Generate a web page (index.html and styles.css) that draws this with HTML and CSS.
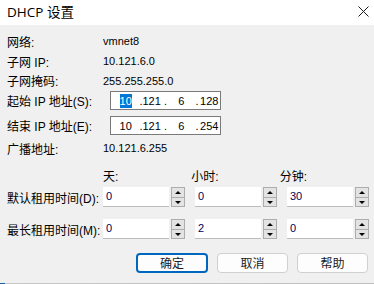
FILE: index.html
```html
<!DOCTYPE html>
<html>
<head>
  <meta charset="UTF-8">
  <link rel="stylesheet" href="styles.css">
</head>
<body>
  <div class="dialog">
    <div class="titlebar">
      <span class="title">DHCP 设置</span>
      <svg class="close" width="11" height="11" viewBox="0 0 11 11">
        <path d="M0.5 0.5 L10.5 10.5 M10.5 0.5 L0.5 10.5" stroke="#1a1a1a" stroke-width="1" fill="none"/>
      </svg>
    </div>

    <div class="content">
      <div class="row r-net">
        <span class="label">网络:</span>
        <span class="value">vmnet8</span>
      </div>
      <div class="row r-subnet">
        <span class="label">子网 IP:</span>
        <span class="value">10.121.6.0</span>
      </div>
      <div class="row r-mask">
        <span class="label">子网掩码:</span>
        <span class="value">255.255.255.0</span>
      </div>

      <div class="row r-start">
        <span class="label">起始 IP 地址(S):</span>
        <div class="ipbox">
          <span class="f f1"><span class="sel">10</span></span><span class="dot">.</span><span class="f f2">121</span><span class="dot">.</span><span class="f f3">6</span><span class="dot">.</span><span class="f f4">128</span>
        </div>
      </div>
      <div class="row r-end">
        <span class="label">结束 IP 地址(E):</span>
        <div class="ipbox">
          <span class="f f1">10</span><span class="dot">.</span><span class="f f2">121</span><span class="dot">.</span><span class="f f3">6</span><span class="dot">.</span><span class="f f4">254</span>
        </div>
      </div>
      <div class="row r-bcast">
        <span class="label">广播地址:</span>
        <span class="value">10.121.6.255</span>
      </div>

      <div class="row r-heads">
        <span class="label"></span>
        <span class="head">天:</span>
        <span class="head">小时:</span>
        <span class="head">分钟:</span>
      </div>

      <div class="row r-default">
        <span class="label">默认租用时间(D):</span>
        <div class="spin"><span class="num">0</span><div class="arrows"><span class="up"></span><span class="down"></span></div></div>
        <div class="spin"><span class="num">0</span><div class="arrows"><span class="up"></span><span class="down"></span></div></div>
        <div class="spin"><span class="num">30</span><div class="arrows"><span class="up"></span><span class="down"></span></div></div>
      </div>
      <div class="row r-max">
        <span class="label">最长租用时间(M):</span>
        <div class="spin"><span class="num">0</span><div class="arrows"><span class="up"></span><span class="down"></span></div></div>
        <div class="spin"><span class="num">2</span><div class="arrows"><span class="up"></span><span class="down"></span></div></div>
        <div class="spin"><span class="num">0</span><div class="arrows"><span class="up"></span><span class="down"></span></div></div>
      </div>

      <div class="buttons">
        <button class="btn btn-default">确定</button>
        <button class="btn">取消</button>
        <button class="btn">帮助</button>
      </div>
    </div>
    <div class="edge"></div>
  </div>
</body>
</html>
```

FILE: styles.css
```css
body {
  margin: 0;
  padding: 0;
  width: 374px;
  height: 284px;
  overflow: hidden;
  font-family: 'Liberation Sans', 'Noto Sans CJK SC', sans-serif;
  font-size: 12px;
  color: #000;
  background: #f0f0f0;
}

.dialog {
  height: 284px;
  display: flex;
  flex-direction: column;
}

.titlebar {
  height: 25px;
  background: #fff;
  display: flex;
  align-items: center;
  justify-content: space-between;
  padding: 0 5px 0 7px;
  box-sizing: border-box;
}

.title {
  font-family: 'Open Sans', 'Noto Sans CJK SC', sans-serif;
  font-size: 13.5px;
  margin-top: -3px;
}

.close {
  margin-top: -3px;
}

.content {
  flex: 1;
  padding: 6px 6px 0 7px;
}

.row {
  display: flex;
  align-items: center;
}

.label {
  width: 96px;
  flex: 0 0 96px;
  white-space: nowrap;
}

.value {
  font-size: 11px;
}

.r-net,
.r-subnet {
  height: 20px;
}

.r-mask {
  height: 19px;
}

.r-start {
  margin-top: 1px;
}

.r-end {
  margin-top: 6px;
}

.r-bcast {
  height: 20px;
  margin-top: 3px;
}

/* IP address control */
.ipbox {
  margin-left: 7px;
  width: 111px;
  height: 19px;
  box-sizing: border-box;
  background: #fff;
  border: 1px solid #7a7a7a;
  display: flex;
  align-items: center;
  font-size: 11px;
  padding-left: 1px;
}

.f {
  text-align: center;
  white-space: nowrap;
}

.f1 { width: 28px; }
.f2 { width: 22px; text-align: left; }
.f3 { width: 29px; }
.f4 { width: 22px; }

.dot {
  width: 3px;
}

.sel {
  background: #0078d7;
  color: #fff;
  padding: 1px 0;
}

/* lease time grid */
.r-heads {
  height: 18px;
  margin-top: 8px;
}

.head {
  width: 92px;
}

.r-default {
  margin-top: 3px;
}

.r-max {
  margin-top: 12px;
}

.spin {
  width: 82px;
  height: 20px;
  margin-right: 10px;
  display: flex;
}

.num {
  width: 66px;
  box-sizing: border-box;
  background: #fff;
  border-bottom: 1px solid #bcbcbc;
  font-size: 11px;
  padding: 3px 0 0 3px;
  color: #00005a;
}

.arrows {
  margin-left: 2px;
  width: 14px;
  display: flex;
  flex-direction: column;
}

.arrows span {
  flex: 1;
  background: #e3e3e3;
  border: 1px solid #adadad;
  position: relative;
}

.arrows .down {
  border-top: none;
}

.arrows span::after {
  content: '';
  position: absolute;
  left: 3px;
  top: 3px;
  border-left: 3px solid transparent;
  border-right: 3px solid transparent;
}

.arrows .up::after {
  border-bottom: 3px solid #000;
}

.arrows .down::after {
  border-top: 3px solid #000;
}

/* buttons */
.buttons {
  display: flex;
  justify-content: flex-end;
  gap: 9px;
  margin-top: 14px;
}

.btn {
  width: 71px;
  height: 20px;
  box-sizing: border-box;
  background: #fdfdfd;
  border: 1px solid #d0d0d0;
  border-radius: 4px;
  font-family: 'Noto Sans CJK SC', sans-serif;
  font-size: 12px;
  color: #1a1a1a;
  padding: 0;
  line-height: 16px;
}

.btn-default {
  width: 72px;
  border: 2px solid #0067c0;
}

.edge {
  height: 1px;
  background: linear-gradient(to right, #1f5fa0 0, #1f5fa0 5px, #c8c8c8 5px, #bdbdbd 100%);
}
```
